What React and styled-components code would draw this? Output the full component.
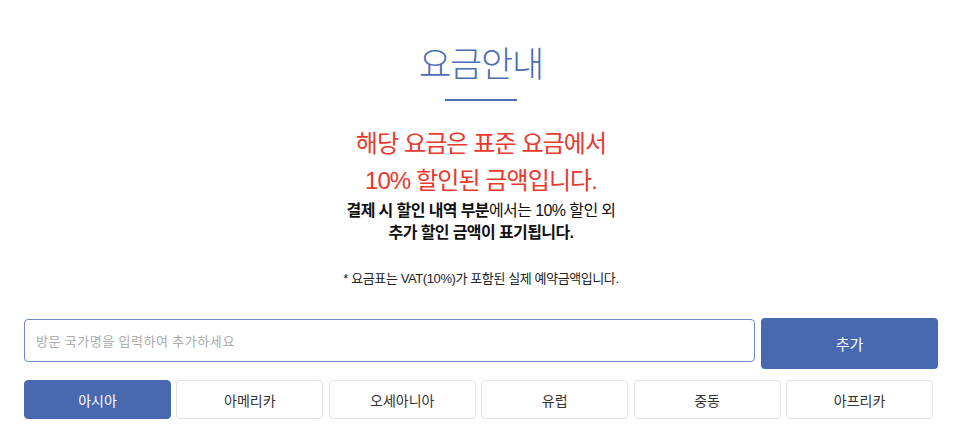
import React, { useState } from 'react';
import styled, { createGlobalStyle } from 'styled-components';

const GlobalStyle = createGlobalStyle`
  html, body {
    margin: 0;
    padding: 0;
    background: #fff;
  }
  body {
    font-family: "Noto Sans CJK KR", "Noto Sans", sans-serif;
    color: #222;
  }
`;

const Page = styled.div`
  padding: 37px 28px 0 24px;
`;

const Header = styled.div`
  display: flex;
  flex-direction: column;
  align-items: center;
  text-align: center;
  font-family: "Liberation Sans", "Noto Sans CJK KR", sans-serif;
`;

const Title = styled.h1`
  margin: 0;
  font-family: "Noto Sans CJK KR", sans-serif;
  font-size: 35px;
  font-weight: 300;
  line-height: 50px;
  letter-spacing: -1.2px;
  color: #4a6db5;
`;

const Underline = styled.div`
  width: 72px;
  height: 2px;
  margin-top: 12px;
  background: #4a6db5;
`;

const Notice = styled.p`
  margin: 24px 0 0;
  font-size: 24px;
  font-weight: 400;
  line-height: 37px;
  letter-spacing: -0.9px;
  color: #e8392c;
`;

const Detail = styled.p`
  margin: 1px 0 0;
  font-size: 16px;
  line-height: 22px;
  letter-spacing: -0.6px;
  color: #111;
  b {
    font-weight: 700;
  }
`;

const Note = styled.p`
  margin: 25px 0 0;
  font-size: 13px;
  line-height: 20px;
  letter-spacing: -0.4px;
  color: #222;
`;

const SearchRow = styled.div`
  display: flex;
  align-items: flex-start;
  gap: 6px;
  margin-top: 29px;
`;

const SearchInput = styled.input`
  flex: 1;
  height: 43px;
  box-sizing: border-box;
  margin-top: 1px;
  padding: 0 11px;
  border: 1px solid #6f89c4;
  border-radius: 4px;
  font-family: inherit;
  font-size: 13px;
  color: #333;
  outline: none;
  &::placeholder {
    color: #aaa;
    letter-spacing: 0.6px;
  }
`;

const AddButton = styled.button`
  width: 177px;
  height: 51px;
  border: 0;
  border-radius: 4px;
  background: #4869b0;
  color: #fff;
  font-family: inherit;
  font-size: 15px;
  cursor: pointer;
`;

const Tabs = styled.div`
  display: grid;
  grid-template-columns: repeat(6, 1fr);
  gap: 5.5px;
  margin: 11px 5px 0 0;
`;

const Tab = styled.button`
  height: 39px;
  box-sizing: border-box;
  border: 1px solid ${p => (p.$active ? '#4869b0' : '#e2e2e2')};
  border-radius: 4px;
  background: ${p => (p.$active ? '#4869b0' : '#fff')};
  color: ${p => (p.$active ? '#fff' : '#333')};
  font-family: inherit;
  font-size: 14px;
  cursor: pointer;
`;

const regions = ['아시아', '아메리카', '오세아니아', '유럽', '중동', '아프리카'];

export default function App() {
  const [active, setActive] = useState(0);

  return (
    <>
      <GlobalStyle />
      <Page>
        <Header>
          <Title>요금안내</Title>
          <Underline />
          <Notice>
            해당 요금은 표준 요금에서
            <br />
            10% 할인된 금액입니다.
          </Notice>
          <Detail>
            <b>결제 시 할인 내역 부분</b>에서는 10% 할인 외
            <br />
            <b>추가 할인 금액이 표기됩니다.</b>
          </Detail>
          <Note>* 요금표는 VAT(10%)가 포함된 실제 예약금액입니다.</Note>
        </Header>
        <SearchRow>
          <SearchInput placeholder="방문 국가명을 입력하여 추가하세요" />
          <AddButton>추가</AddButton>
        </SearchRow>
        <Tabs>
          {regions.map((name, i) => (
            <Tab key={name} $active={i === active} onClick={() => setActive(i)}>
              {name}
            </Tab>
          ))}
        </Tabs>
      </Page>
    </>
  );
}
